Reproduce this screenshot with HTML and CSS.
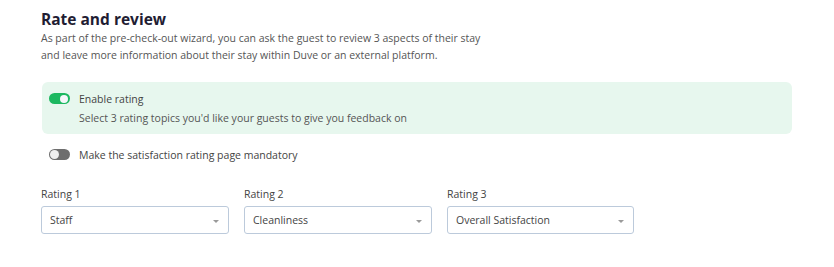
FILE: index.html
```html
<!DOCTYPE html>
<html>
<head>
<meta charset="utf-8">
<link rel="stylesheet" href="styles.css">
</head>
<body>
<section class="panel">
  <h2 class="title">Rate and review</h2>
  <p class="desc">As part of the pre-check-out wizard, you can ask the guest to review 3 aspects of their stay<br>and leave more information about their stay within Duve or an external platform.</p>

  <div class="enable-box">
    <div class="toggle-row">
      <span class="switch on"><span class="knob"></span></span>
      <span class="toggle-label">Enable rating</span>
    </div>
    <div class="hint">Select 3 rating topics you'd like your guests to give you feedback on</div>
  </div>

  <div class="toggle-row mandatory">
    <span class="switch off"><span class="knob"></span></span>
    <span class="toggle-label">Make the satisfaction rating page mandatory</span>
  </div>

  <div class="ratings">
    <div class="field">
      <div class="field-label">Rating 1</div>
      <div class="select"><span>Staff</span><span class="caret"></span></div>
    </div>
    <div class="field">
      <div class="field-label">Rating 2</div>
      <div class="select"><span>Cleanliness</span><span class="caret"></span></div>
    </div>
    <div class="field">
      <div class="field-label">Rating 3</div>
      <div class="select"><span>Overall Satisfaction</span><span class="caret"></span></div>
    </div>
  </div>
</section>
</body>
</html>
```

FILE: styles.css
```css
* { box-sizing: border-box; }
html, body { margin: 0; padding: 0; background: #ffffff; }
body {
  font-family: "Open Sans", "Liberation Sans", sans-serif;
  color: #4a4a4a;
}
.panel {
  padding: 8px 42px 0 41px;
  width: 834px;
}
.title {
  margin: 0;
  font-size: 15.5px;
  font-weight: 700;
  color: #1f1d33;
  line-height: 22px;
}
.desc {
  margin: 0;
  font-size: 10.5px;
  line-height: 17px;
  color: #555555;
}
.enable-box {
  margin-top: 18px;
  margin-left: 1px;
  background: #e7f7ee;
  border-radius: 6px;
  padding: 8px 8px 8px 7px;
  width: 750px;
}
.toggle-row {
  display: flex;
  align-items: center;
  gap: 9px;
  height: 17px;
}
.toggle-label {
  font-size: 10.5px;
  color: #444444;
}
.hint {
  margin-top: 3px;
  padding-left: 30px;
  font-size: 10.5px;
  line-height: 16px;
  color: #555555;
}
.switch {
  position: relative;
  display: inline-block;
  width: 21px;
  height: 11px;
  border-radius: 6px;
  flex: none;
}
.switch.on { background: #1cb860; }
.switch.off { background: #6e6e6e; }
.knob {
  position: absolute;
  top: 1.5px;
  width: 8px;
  height: 8px;
  border-radius: 50%;
}
.switch.on .knob { right: 2px; background: #f5f7fa; }
.switch.off .knob { left: 1px; top: 1px; width: 9px; height: 9px; background: #eeeeee; }
.mandatory {
  margin-top: 12px;
  margin-left: 8px;
}
.ratings {
  display: flex;
  gap: 15px;
  margin-top: 24px;
}
.field { width: 188px; }
.field:last-child { width: 187px; }
.field-label {
  font-size: 10.5px;
  line-height: 14px;
  color: #444444;
  margin-bottom: 5px;
}
.select {
  display: flex;
  align-items: center;
  justify-content: space-between;
  height: 28px;
  border: 1px solid #bccadb;
  border-radius: 3px;
  padding: 0 9px 0 8px;
  font-size: 10.5px;
  color: #444444;
}
.caret {
  width: 0;
  height: 0;
  border-left: 3px solid transparent;
  border-right: 3px solid transparent;
  border-top: 3px solid #9a9a9a;
  margin-top: 3px;
}
```
